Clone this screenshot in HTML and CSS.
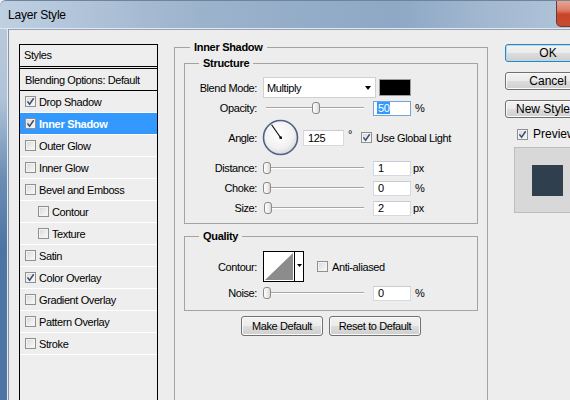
FILE: index.html
```html
<!DOCTYPE html>
<html>
<head>
<meta charset="utf-8">
<title>Layer Style</title>
<link rel="stylesheet" href="styles.css">
</head>
<body>
<div class="window">
  <div class="titlebar">
    <span class="title">Layer Style</span>
    <span class="close"></span>
  </div>
  <div class="frame">
    <div class="frame-left"></div>
    <div class="client">
      <div class="styles-panel">
        <div class="styles-head">Styles</div>
        <div class="row blending">Blending Options: Default</div>
        <div class="row"><span class="cb"><svg viewBox="0 0 9 9" width="9" height="9"><path d="M1.4 4.4 3.6 7.2 7.7 1.3" fill="none" stroke="#3b4d7a" stroke-width="1.5"/></svg></span><span class="rtext">Drop Shadow</span></div>
        <div class="row selected"><span class="cb"><svg viewBox="0 0 9 9" width="9" height="9"><path d="M1.4 4.4 3.6 7.2 7.7 1.3" fill="none" stroke="#3b4d7a" stroke-width="1.5"/></svg></span><span class="rtext">Inner Shadow</span></div>
        <div class="row"><span class="cb"></span><span class="rtext">Outer Glow</span></div>
        <div class="row"><span class="cb"></span><span class="rtext">Inner Glow</span></div>
        <div class="row"><span class="cb"></span><span class="rtext">Bevel and Emboss</span></div>
        <div class="row sub"><span class="cb"></span><span class="rtext">Contour</span></div>
        <div class="row sub"><span class="cb"></span><span class="rtext">Texture</span></div>
        <div class="row"><span class="cb"></span><span class="rtext">Satin</span></div>
        <div class="row"><span class="cb"><svg viewBox="0 0 9 9" width="9" height="9"><path d="M1.4 4.4 3.6 7.2 7.7 1.3" fill="none" stroke="#3b4d7a" stroke-width="1.5"/></svg></span><span class="rtext">Color Overlay</span></div>
        <div class="row"><span class="cb"></span><span class="rtext">Gradient Overlay</span></div>
        <div class="row"><span class="cb"></span><span class="rtext">Pattern Overlay</span></div>
        <div class="row"><span class="cb"></span><span class="rtext">Stroke</span></div>
      </div>

      <fieldset class="group outer">
        <legend class="legend-outer">Inner Shadow</legend>

        <fieldset class="group structure">
          <legend class="legend-inner">Structure</legend>

          <div class="frow blend">
            <label class="lbl">Blend Mode:</label>
            <div class="select"><span>Multiply</span><span class="arrow"></span></div>
            <span class="swatch"></span>
          </div>

          <div class="frow opacity">
            <label class="lbl">Opacity:</label>
            <div class="slider"><span class="track"></span><span class="thumb" style="left:49px"></span></div>
            <span class="field focus"><span class="sel">50</span></span>
            <span class="unit">%</span>
          </div>

          <div class="frow angle">
            <label class="lbl">Angle:</label>
            <svg class="dial" width="37" height="37" viewBox="0 0 37 37">
              <defs>
                <radialGradient id="dg" cx="45%" cy="40%" r="60%">
                  <stop offset="0" stop-color="#ffffff"/>
                  <stop offset="0.7" stop-color="#f1f1f1"/>
                  <stop offset="1" stop-color="#d9d9d9"/>
                </radialGradient>
              </defs>
              <circle cx="18.5" cy="18.5" r="17" fill="url(#dg)" stroke="#4f5f86" stroke-width="1.6"/>
              <line x1="18.5" y1="18.5" x2="9.6" y2="5.8" stroke="#000" stroke-width="1.1"/>
              <rect x="17.5" y="17.5" width="2.4" height="2.4" fill="#000"/>
            </svg>
            <span class="field angle-field">125</span>
            <span class="deg">°</span>
            <span class="cb gl"><svg viewBox="0 0 9 9" width="9" height="9"><path d="M1.4 4.4 3.6 7.2 7.7 1.3" fill="none" stroke="#3b4d7a" stroke-width="1.5"/></svg></span>
            <span class="cbtext">Use Global Light</span>
          </div>

          <div class="frow">
            <label class="lbl">Distance:</label>
            <div class="slider"><span class="track"></span><span class="thumb" style="left:0px"></span></div>
            <span class="field">1</span>
            <span class="unit px">px</span>
          </div>

          <div class="frow">
            <label class="lbl">Choke:</label>
            <div class="slider"><span class="track"></span><span class="thumb" style="left:0px"></span></div>
            <span class="field">0</span>
            <span class="unit">%</span>
          </div>

          <div class="frow">
            <label class="lbl">Size:</label>
            <div class="slider"><span class="track"></span><span class="thumb" style="left:1px"></span></div>
            <span class="field">2</span>
            <span class="unit px">px</span>
          </div>
        </fieldset>

        <fieldset class="group quality">
          <legend class="legend-inner">Quality</legend>

          <div class="frow contour-row">
            <label class="lbl">Contour:</label>
            <svg class="contour" width="41" height="31" viewBox="0 0 41 31">
              <rect x="0.5" y="0.5" width="40" height="30" fill="#fff" stroke="#000"/>
              <polygon points="2,29 30,2 30,29" fill="#8c8c8c"/>
              <line x1="31.5" y1="1" x2="31.5" y2="30" stroke="#000"/>
              <polygon points="34,13 39,13 36.5,16" fill="#000"/>
            </svg>
            <span class="cb aa"></span>
            <span class="cbtext">Anti-aliased</span>
          </div>

          <div class="frow noise">
            <label class="lbl">Noise:</label>
            <div class="slider"><span class="track"></span><span class="thumb" style="left:0px"></span></div>
            <span class="field">0</span>
            <span class="unit">%</span>
          </div>
        </fieldset>

        <div class="btnrow">
          <button class="btn small make">Make Default</button>
          <button class="btn small reset">Reset to Default</button>
        </div>
      </fieldset>

      <div class="actions">
        <button class="btn big default">OK</button>
        <button class="btn big">Cancel</button>
        <button class="btn big">New Style...</button>
        <div class="preview-check">
          <span class="cb"><svg viewBox="0 0 9 9" width="9" height="9"><path d="M1.4 4.4 3.6 7.2 7.7 1.3" fill="none" stroke="#3b4d7a" stroke-width="1.5"/></svg></span>
          <span class="ptext">Preview</span>
        </div>
        <div class="preview"><span class="preview-swatch"></span></div>
      </div>
    </div>
  </div>
</div>
</body>
</html>
```

FILE: styles.css
```css
html, body {
  margin: 0;
  padding: 0;
  background: #ededed;
}

body {
  font-family: "Liberation Sans", Arial, sans-serif;
  font-size: 11px;
  letter-spacing: -0.4px;
  color: #000;
}

.window {
  width: 570px;
  height: 400px;
  overflow: hidden;
  background: #ededed;
}

/* ---------- title bar ---------- */
.titlebar {
  height: 28px;
  display: flex;
  align-items: center;
  justify-content: space-between;
  overflow: hidden;
  border-top-left-radius: 6px;
  border-top: 1px solid #6f839b;
  box-sizing: border-box;
  border-bottom: 1px solid #dfe7f0;
  height: 29px;
  background: linear-gradient(90deg, #bfd0e2 0%, #b0c3d8 15%, #9cb3cc 35%, #93acc7 55%, #8ea8c5 70%, #a2b8d0 85%, #b0c4d9 100%);
}

.title {
  margin-left: 8px;
  font-size: 12px;
  letter-spacing: -0.2px;
  margin-top: 1px;
}

.close {
  align-self: flex-start;
  flex-shrink: 0;
  width: 43px;
  height: 27px;
  margin-top: -1px;
  margin-right: -29px;
  box-sizing: border-box;
  border: 1px solid #6b3b33;
  border-top: none;
  border-radius: 0 0 5px 5px;
  background: linear-gradient(#e9aa9b 0%, #dc7c66 40%, #c9452a 55%, #c64b2f 100%);
}

/* ---------- frame ---------- */
.frame {
  display: flex;
  height: 371px;
}

.frame-left {
  width: 7px;
  flex-shrink: 0;
  border-right: 1px solid #e6edf5;
  background: linear-gradient(#b8c9db 0, #b1c3d7 70px, #6a8db5 150px, #4d75a3 220px, #4f76a3 100%);
}

.client {
  flex: 1;
  display: flex;
  align-items: flex-start;
  background: #ededed;
  border-left: 1px solid #8593a6;
  border-top: 1px solid #95a3b4;
  padding: 10px 0 0 10px;
  overflow: hidden;
}

/* ---------- checkbox ---------- */
.cb {
  width: 11px;
  height: 11px;
  box-sizing: border-box;
  flex-shrink: 0;
  border: 1px solid #8e8f8f;
  background: linear-gradient(135deg, #d6d6d6 0%, #eaeaea 50%, #fafafa 100%);
  box-shadow: inset 0 0 0 1px #f3f3f3;
  display: inline-flex;
  align-items: center;
  justify-content: center;
}

.cb svg {
  display: block;
}

/* ---------- styles panel ---------- */
.styles-panel {
  width: 139px;
  height: 360px;
  flex-shrink: 0;
  margin-top: 4px;
  box-sizing: border-box;
  border: 1px solid #000;
  border-bottom: none;
  background: #eeeeee;
}

.styles-head {
  height: 21px;
  line-height: 21px;
  padding-left: 4px;
  border-bottom: 3px double #000;
}

.row {
  height: 21px;
  display: flex;
  align-items: center;
  padding-left: 5px;
  border-bottom: 1px solid #ffffff;
}

.row.blending {
  border-bottom: 1px solid #000;
  padding-left: 5px;
}

.row .rtext {
  margin-left: 3px;
}

.row.sub {
  padding-left: 18px;
}

.row.selected {
  background: #3399ff;
  color: #fff;
  font-weight: bold;
  letter-spacing: -0.3px;
}

/* ---------- group boxes ---------- */
.group {
  margin: 0;
  min-width: 0;
  box-sizing: border-box;
  border: 1px solid #a3a3a3;
}

.group legend {
  font-weight: bold;
  line-height: 14px;
  padding: 0 4px;
  letter-spacing: -0.3px;
}

.outer {
  flex-shrink: 0;
  width: 314px;
  min-height: 380px;
  margin-left: 16px;
  padding: 0 9px;
}

.legend-outer {
  margin-left: 6px;
}

.legend-inner {
  margin-left: 14px;
}

.structure {
  margin-top: 2px;
  padding: 0 0 6px 0;
}

.quality {
  margin-top: 5px;
  padding: 0 0 8px 0;
}

/* ---------- form rows ---------- */
.frow {
  display: flex;
  align-items: center;
  height: 18px;
  margin-top: 2px;
}

.frow.blend {
  height: 21px;
  margin-top: 7px;
}

.frow.opacity {
  height: 16px;
  margin-top: 2px;
}

.frow.angle {
  height: 37px;
  margin-top: 3px;
  margin-bottom: 3px;
}

.frow.contour-row {
  height: 31px;
  margin-top: 8px;
}

.frow.noise {
  margin-top: 2px;
}

.lbl {
  width: 72px;
  flex-shrink: 0;
  text-align: right;
  margin-right: 6px;
}

.select {
  width: 113px;
  height: 21px;
  box-sizing: border-box;
  border: 1px solid #d0d0d0;
  background: #fff;
  display: flex;
  align-items: center;
  justify-content: space-between;
  padding: 0 4px 0 3px;
}

.arrow {
  width: 0;
  height: 0;
  border-left: 3.5px solid transparent;
  border-right: 3.5px solid transparent;
  border-top: 4px solid #000;
}

.swatch {
  width: 32px;
  height: 17px;
  box-sizing: border-box;
  margin-left: 3px;
  background: #000;
  border: 1px solid #9c9c9c;
}

.slider {
  position: relative;
  width: 104px;
  height: 100%;
  flex-shrink: 0;
}

.track {
  position: absolute;
  left: 3px;
  right: 3px;
  top: calc(50% - 1px);
  height: 1px;
  border-top: 1px solid #a6a6a6;
  background: #fff;
}

.thumb {
  position: absolute;
  top: calc(50% - 6px);
  width: 8px;
  height: 12px;
  box-sizing: border-box;
  border: 1px solid #8a8a8a;
  border-radius: 3px 3px 3px 3px;
  background: linear-gradient(90deg, #fdfdfd 0%, #ececec 60%, #d6d6d6 100%);
}

.field {
  width: 38px;
  height: 15px;
  box-sizing: border-box;
  flex-shrink: 0;
  margin-left: 6px;
  border: 1px solid #d5d9e0;
  border-top-color: #c8ccd4;
  background: #fff;
  padding-left: 4px;
  line-height: 13px;
}

.field.focus {
  border-color: #74a3d8;
}

.sel {
  background: #3399ff;
  color: #fff;
  padding: 0 1px;
  margin-left: -1px;
}

.unit {
  margin-left: 4px;
}

.unit.px {
  margin-left: 2px;
}

.dial {
  display: block;
  margin-left: -1px;
  flex-shrink: 0;
}

.angle-field {
  width: 41px;
  height: 16px;
  margin-left: 4px;
  line-height: 14px;
}

.deg {
  margin-left: 4px;
  margin-top: -7px;
}

.cb.gl {
  margin-left: 9px;
}

.cbtext {
  margin-left: 4px;
}

.contour {
  display: block;
  flex-shrink: 0;
}

.cb.aa {
  margin-left: 13px;
}

/* ---------- buttons ---------- */
.btn {
  font-family: "Liberation Sans", Arial, sans-serif;
  color: #000;
  box-sizing: border-box;
  border: 1px solid #707070;
  border-radius: 3px;
  padding: 0;
  background: linear-gradient(#f2f2f2 0%, #ebebeb 49%, #dddddd 50%, #cfcfcf 100%);
  box-shadow: inset 0 0 0 1px #fbfbfb;
}

.btn.small {
  font-size: 11px;
  letter-spacing: -0.4px;
  height: 20px;
}

.btnrow {
  display: flex;
  justify-content: center;
  gap: 6px;
  margin-top: 5px;
}

.btn.make {
  width: 82px;
}

.btn.reset {
  width: 92px;
}

.actions {
  flex-shrink: 0;
  width: 86px;
  margin-left: 17px;
  margin-top: 4px;
}

.btn.big {
  display: block;
  width: 86px;
  height: 18px;
  font-size: 12px;
  letter-spacing: 0;
  line-height: 16px;
  margin-bottom: 10px;
}

.btn.default {
  border-color: #3c7fb1;
  box-shadow: inset 0 0 0 1px #9fe2f8;
}

.preview-check {
  display: flex;
  align-items: center;
  height: 12px;
  padding-left: 12px;
  font-size: 12px;
  letter-spacing: 0;
}

.ptext {
  margin-left: 5px;
}

.preview {
  width: 66px;
  height: 66px;
  margin-top: 7px;
  margin-left: 9px;
  box-sizing: border-box;
  border: 1px solid #bdbdbd;
  background: #d8d8d8;
  display: flex;
  align-items: center;
  justify-content: center;
}

.preview-swatch {
  width: 31px;
  height: 31px;
  background: #2f3f4d;
}
```
